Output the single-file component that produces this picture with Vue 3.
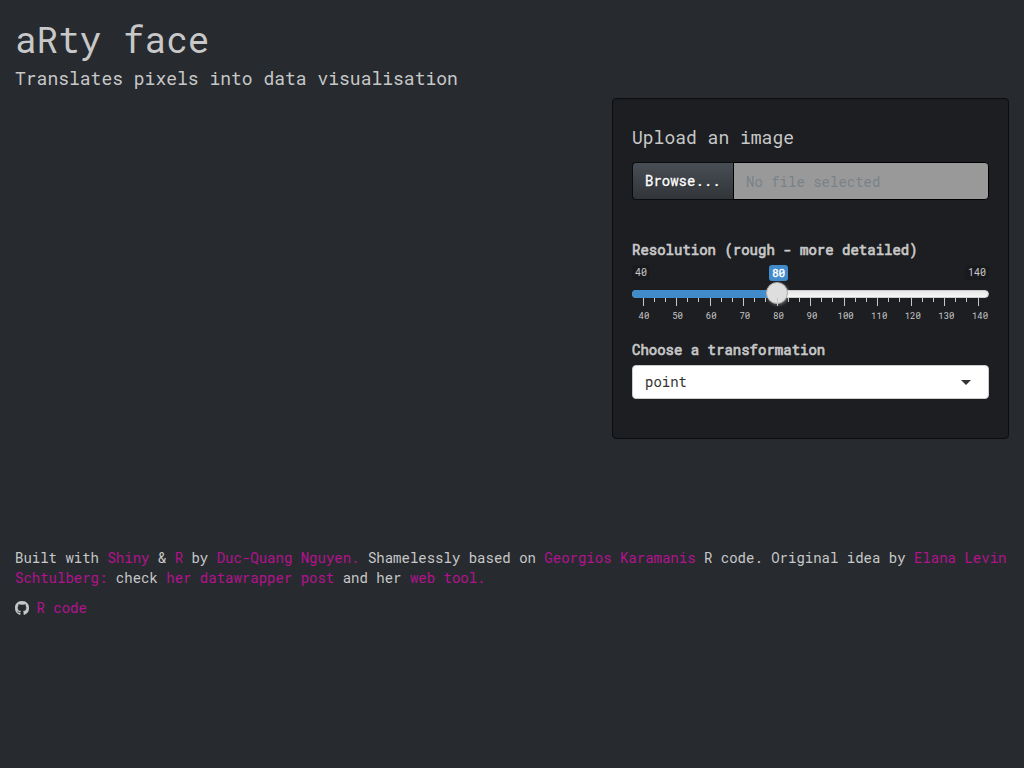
<script setup>
const min = 40
const max = 140
const value = 80
const majors = Array.from({ length: 11 }, (_, i) => min + i * 10)
const ticks = Array.from({ length: 31 }, (_, i) => ({
  left: Math.floor((i * 335) / 30) + 'px',
  major: i % 3 === 0
}))
const labelLeft = v => ((v - min) / (max - min)) * 100 + '%'
</script>

<template>
  <div class="page">
    <h2>aRty face</h2>
    <h4 class="subtitle">Translates pixels into data visualisation</h4>

    <div class="row">
      <form class="well">
        <h4>Upload an image</h4>
        <div class="file">
          <span class="browse">Browse...</span>
          <span class="filename">No file selected</span>
        </div>

        <label class="resolution">Resolution (rough - more detailed)</label>
        <div class="slider">
          <div class="bounds">
            <span class="bound">{{ min }}</span>
            <span class="current">{{ value }}</span>
            <span class="bound">{{ max }}</span>
          </div>
          <div class="line">
            <div class="bar"></div>
            <div class="handle"></div>
          </div>
          <div class="grid">
            <i v-for="(t, i) in ticks" :key="i" class="tick" :class="{ major: t.major }" :style="{ left: t.left }"></i>
            <span v-for="v in majors" :key="v" class="num" :style="{ left: labelLeft(v) }">{{ v }}</span>
          </div>
        </div>

        <label class="choose">Choose a transformation</label>
        <div class="select"><span>point</span><i class="caret"></i></div>
      </form>
    </div>

    <footer>
      <p>
        Built with <a>Shiny</a> &amp; <a>R</a> by <a>Duc-Quang Nguyen.</a> Shamelessly based on
        <a>Georgios Karamanis</a> R code. Original idea by <a>Elana Levin Schtulberg:</a> check
        <a>her datawrapper post</a> and her <a>web tool.</a>
      </p>
      <p class="code">
        <svg viewBox="0 0 16 16" width="14" height="14"><path fill="currentColor" stroke="currentColor" stroke-width=".4" d="M8 0C3.58 0 0 3.58 0 8c0 3.54 2.29 6.53 5.47 7.59.4.07.55-.17.55-.38 0-.19-.01-.82-.01-1.49-2.01.37-2.53-.49-2.69-.94-.09-.23-.48-.94-.82-1.13-.28-.15-.68-.52-.01-.53.63-.01 1.08.58 1.23.82.72 1.21 1.87.87 2.33.66.07-.52.28-.87.51-1.07-1.78-.2-3.64-.89-3.64-3.95 0-.87.31-1.59.82-2.15-.08-.2-.36-1.02.08-2.12 0 0 .67-.21 2.2.82.64-.18 1.32-.27 2-.27s1.36.09 2 .27c1.53-1.04 2.2-.82 2.2-.82.44 1.1.16 1.92.08 2.12.51.56.82 1.27.82 2.15 0 3.07-1.87 3.75-3.65 3.95.29.25.54.73.54 1.48 0 1.07-.01 1.93-.01 2.2 0 .21.15.46.55.38A8.01 8.01 0 0 0 16 8c0-4.42-3.58-8-8-8z" /></svg>
        <a>R code</a>
      </p>
    </footer>
  </div>
</template>

<style>
body { background: #272b30; }
</style>

<style scoped>
.page, .page * { box-sizing: border-box; }
.page {
  font-family: "Roboto Mono", "DejaVu Sans Mono", "Liberation Mono", monospace;
  font-size: 14px;
  line-height: 20px;
  color: #c8c8c8;
  height: 768px;
  overflow: hidden;
  padding: 20px 15px 0;
}
h2 { margin: 0; font-size: 36px; font-weight: 400; line-height: 39px; }
h4 { margin: 0; font-size: 18px; font-weight: 400; line-height: 20px; }
.subtitle { margin-top: 9px; }
.row { display: flex; justify-content: flex-end; margin-top: 10px; height: 450px; }
.well {
  width: 397px;
  height: 341px;
  padding: 28px 19px 0;
  background: #1c1e22;
  border: 1px solid #0c0d0e;
  border-radius: 4px;
  box-shadow: inset 0 1px 1px rgba(0, 0, 0, .05);
}
.file { display: flex; height: 38px; margin-top: 15px; }
.browse {
  width: 101px;
  padding: 8px 12px;
  color: #fff;
  -webkit-text-stroke: .3px #fff;
  line-height: 20px;
  border: 1px solid rgba(0, 0, 0, .6);
  border-right: 0;
  border-radius: 4px 0 0 4px;
  background: linear-gradient(#484e55, #3a3f44 60%, #313539) padding-box;
  text-shadow: 1px 1px 1px rgba(0, 0, 0, .3);
}
.filename {
  flex: 1;
  padding: 9px 12px 7px;
  border: 1px solid #000;
  border-left-width: 1px;
  border-radius: 0 4px 4px 0;
  background: #999;
  color: #7a8288;
}
label { display: block; font-weight: 400; -webkit-text-stroke: .7px #c8c8c8; }
.resolution { margin-top: 40px; }
.slider { margin-top: 5px; height: 75px; }
.bounds { display: flex; justify-content: space-between; height: 25px; position: relative; font-size: 10px; line-height: 13px; }
.bound { height: 15px; padding: 1px 3px; border-radius: 3px; background: rgba(0, 0, 0, .1); }
.current {
  position: absolute;
  left: 137px;
  top: 0;
  height: 16px;
  padding: 1px 3px;
  width: 19px;
  border-radius: 3px;
  background: #428bca;
  color: #fff;
  -webkit-text-stroke: .4px #fff;
  font-size: 11px;
}
.line {
  position: relative;
  height: 8px;
  border-radius: 8px;
  background: linear-gradient(to bottom, #dedede -50%, #fff 150%);
  border: 1px solid #ccc;
}
.bar { position: absolute; left: -1px; top: -1px; width: 146px; height: 8px; border-radius: 8px 0 0 8px; background: #428bca; }
.handle {
  position: absolute;
  left: 133px;
  top: -9px;
  width: 22px;
  height: 22px;
  border-radius: 50%;
  background: #dedede;
  border: 1px solid #ababab;
  box-shadow: 1px 1px 3px rgba(255, 255, 255, .3);
}
.grid { position: relative; width: 336px; height: 27px; margin-left: 11px; }
.tick { position: absolute; top: 0; width: 1px; height: 4px; background: #c8c8c8; }
.tick.major { height: 8px; }
.num { position: absolute; top: 12px; transform: translateX(-50%); margin-left: 1px; font-size: 9px; line-height: 12px; }
.choose { margin-top: 0; }
.select {
  display: flex;
  align-items: center;
  justify-content: space-between;
  height: 34px;
  margin-top: 5px;
  padding: 0 17px 0 12px;
  border: 1px solid #ccc;
  border-radius: 4px;
  background: #fff;
  color: #333;
}
.caret { border: 5px solid transparent; border-top-color: #333; border-bottom: 0; }
p { margin: 0 0 10px; }
a { color: #b5118e; }
.code { display: flex; align-items: center; gap: 7.5px; }
</style>
